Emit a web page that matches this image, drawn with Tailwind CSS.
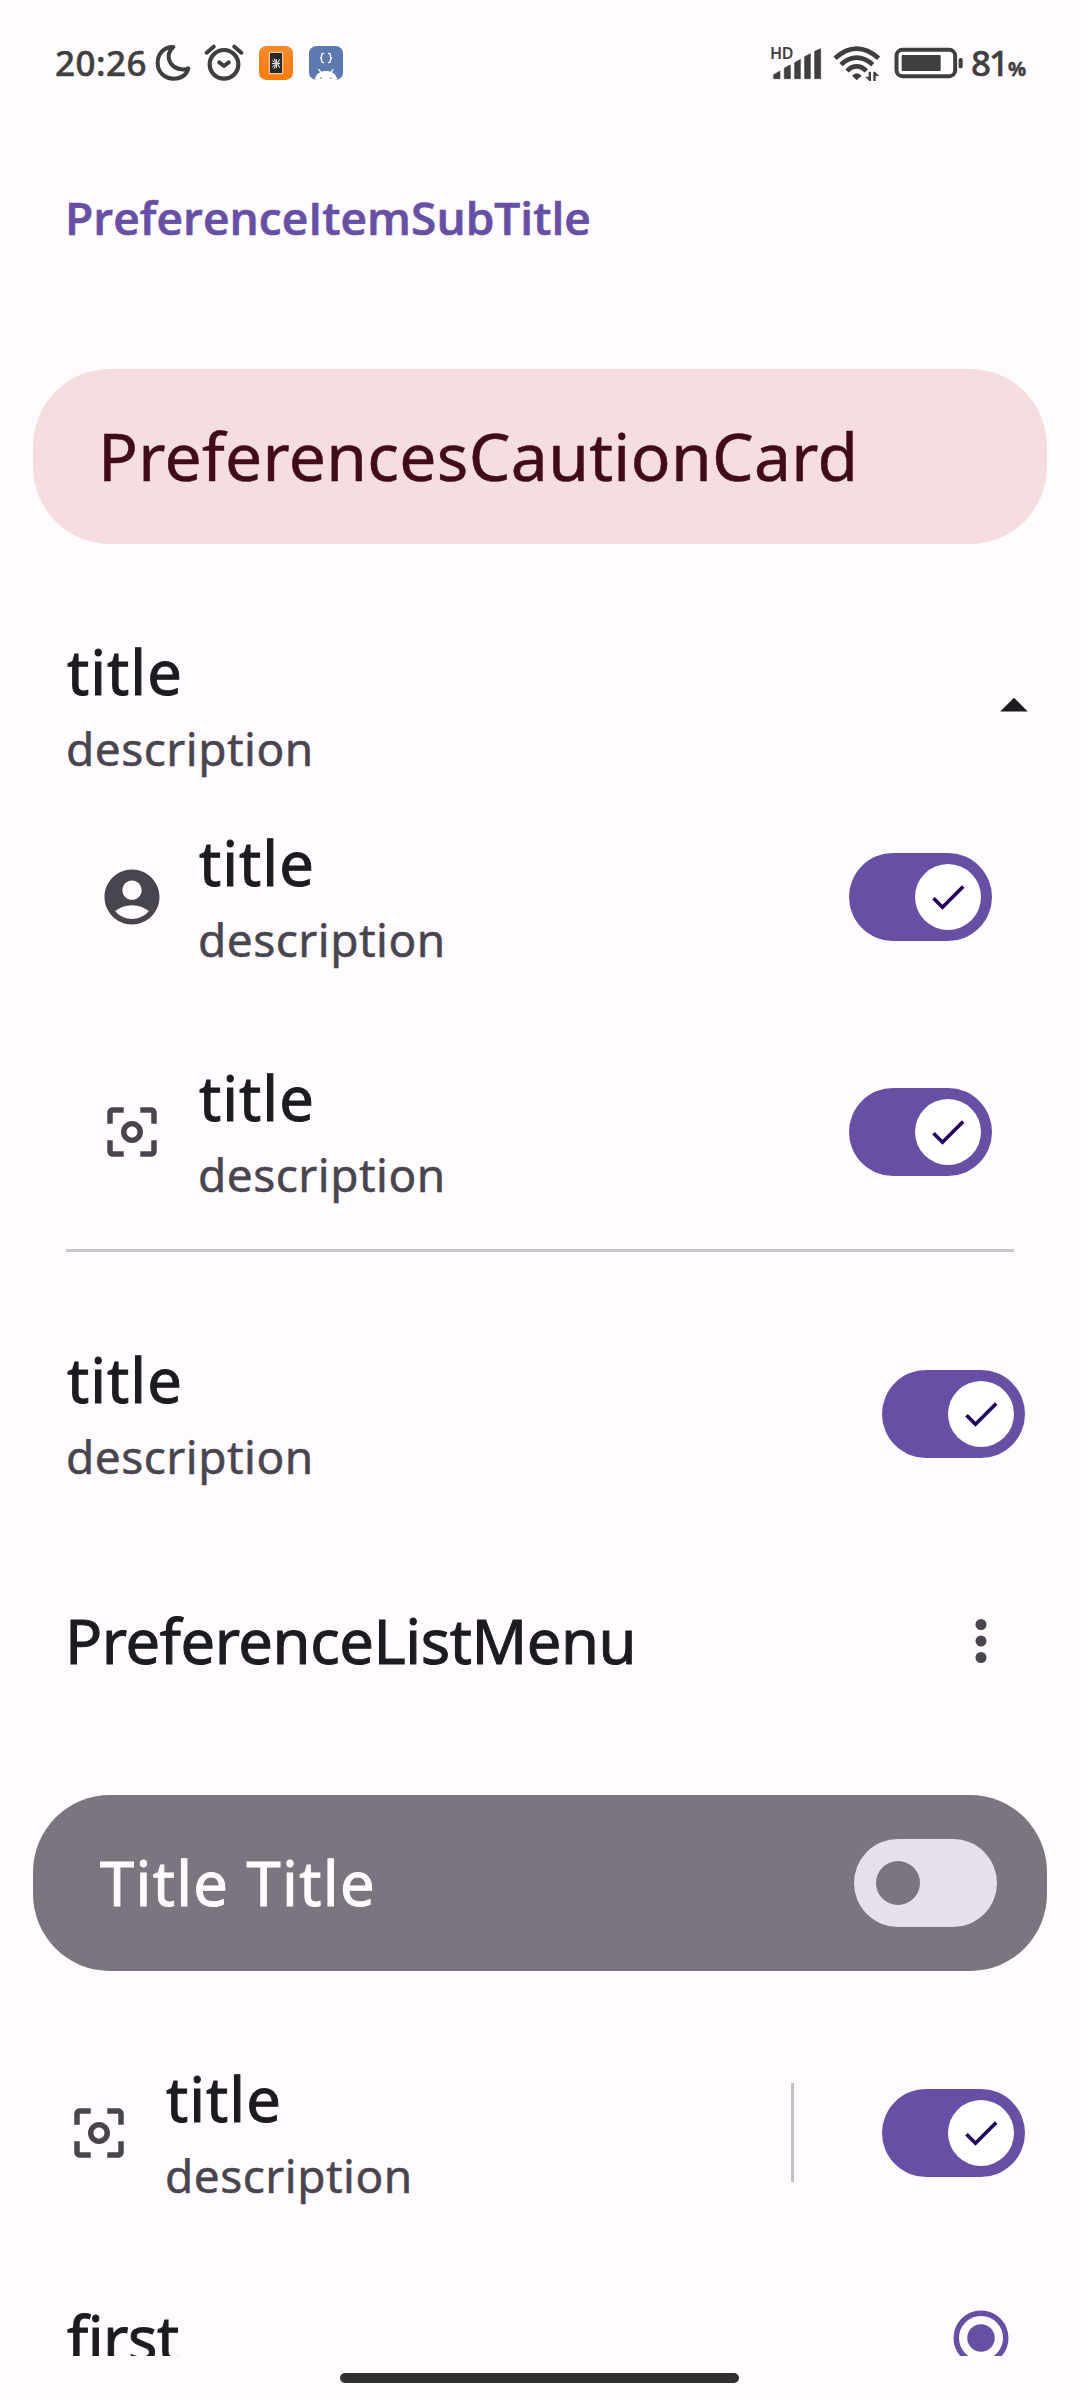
<!DOCTYPE html>
<html lang="en">
<head>
<meta charset="utf-8">
<title>Preferences</title>
<script src="https://cdn.jsdelivr.net/npm/@tailwindcss/browser@4"></script>
</head>
<body class="bg-[#fffbff] w-[1080px] h-[2400px] overflow-hidden font-['Noto_Sans',sans-serif] text-[#1c1b1f]">
<svg class="hidden">
  <symbol id="focus" viewBox="0 0 24 24"><path fill-rule="evenodd" d="M5 15H3v4c0 1.1.9 2 2 2h4v-2H5v-4zM5 5h4V3H5c-1.1 0-2 .9-2 2v4h2V5zm14-2h-4v2h4v4h2V5c0-1.1-.9-2-2-2zm0 16h-4v2h4c1.1 0 2-.9 2-2v-4h-2v4zM12 8c-2.21 0-4 1.79-4 4s1.79 4 4 4 4-1.79 4-4-1.79-4-4-4zm0 6c-1.1 0-2-.9-2-2s.9-2 2-2 2 .9 2 2-.9 2-2 2z"/></symbol>
  <symbol id="check" viewBox="0 0 24 24"><path d="M9 16.17L4.83 12l-1.42 1.41L9 19 21 7l-1.41-1.41z"/></symbol>
</svg>

<div class="h-[2356px] overflow-hidden">
  <!-- Status bar -->
  <header class="h-[126px] flex text-[#3f3f3f] fill-[#3f3f3f] font-medium">
    <div class="w-[100px] ml-[55px] h-[48px] mt-[39px] text-[35px] leading-[48px] whitespace-nowrap tracking-[0.5px] [-webkit-text-stroke:0.5px_#3f3f3f]">20:26</div>
    <svg class="w-[36px] h-[37px] mt-[44px]" viewBox="345 42 108 111"><path fill="none" stroke="#3f3f3f" stroke-width="12" stroke-linejoin="round" d="M400 51C372 50 353 72 353 98C353 127 374 146 401 146C423 146 439 135 445 115C440 118 432 119 425 118C402 116 385 99 386 77C387 66 392 58 400 51Z"/></svg>
    <svg class="w-[40px] h-[38px] ml-[13px] mt-[43px]" viewBox="493 40 120 114" fill="none" stroke="#3f3f3f" stroke-linecap="round" stroke-linejoin="round"><circle cx="553" cy="104" r="43" stroke-width="12.500"/><path stroke-width="12" d="M539 98L553 109L567 98M501 69L522 51M605 69L584 51"/></svg>
    <svg class="w-[34px] h-[34px] ml-[15px] mt-[46px]" viewBox="657 48 102 102"><defs><linearGradient id="or" x2="0" y2="1"><stop stop-color="#f58a2c"/><stop offset="1" stop-color="#fb7a0b"/></linearGradient></defs><rect x="657" y="48" width="102" height="102" rx="22" fill="url(#or)"/><rect x="688" y="67" width="40" height="64" fill="#292929" stroke="#ffe0bd" stroke-width="3"/><path fill="none" stroke="#fff" stroke-width="3" d="M697 92l6 4h6M696 101h12M697 111l6-5h6M702 86l4 7M702 116l4-7M709 87v27M719 88l-7 12 7 13M713 100h7"/></svg>
    <svg class="w-[34px] h-[34px] ml-[16px] mt-[46px]" viewBox="807 48 102 102"><rect x="807" y="48" width="102" height="102" rx="22" fill="#5e79b0"/><path fill="none" stroke="#fff" stroke-width="4" d="M852 70h-3q-4 0-4 4v5q0 4-5 5q5 1 5 5v5q0 4 4 4h3M864 70h3q4 0 4 4v5q0 4 5 5q-5 1-5 5v5q0 4-4 4h-3M836 117l7 11M880 117l-7 11"/><path fill="#fff" d="M824 148C829 130 842 123 858 123S887 130 892 148L885 150H831Z"/><circle cx="843" cy="144" r="2.500" fill="#5e79b0"/><circle cx="873" cy="144" r="2.500" fill="#5e79b0"/></svg>

    <div class="relative ml-[427px] w-[52px] h-[34px] mt-[46px]">
      <svg class="w-[52px] h-[34px]" viewBox="60 48 156 102"><path stroke="#3f3f3f" stroke-width="2" stroke-linejoin="round" d="M71 134L90 123V146H71ZM103 114L121 105V146H103ZM134 98L151 88V146H134ZM164 80L181 71V146H164ZM194 64L212 56V146H194Z"/></svg>
      <span class="absolute left-0 -top-[1px] text-[16px] leading-[16px] font-semibold tracking-[-0.3px]">HD</span>
    </div>
    <svg class="w-[48px] h-[36px] ml-[11px] mt-[45px]" viewBox="249 45 144 108"><g fill="none" stroke="#3f3f3f" stroke-width="14"><path d="M255 85Q287 56 320 56T386 85"/><path d="M273 104Q295 83 320 83T368 104"/><path d="M291 123Q304 109 320 109T349 123"/></g><path d="M306 137Q320 122 335 137L320 151ZM356 125h7v28h-5l-12-13h10zM370 153v-28h5l12 13h-10v15z"/></svg>
    <svg class="w-[70px] h-[32px] ml-[13px] mt-[47px]" viewBox="433 51 210 96"><rect x="440.500" y="59.500" width="176" height="79" rx="18" fill="none" stroke="#3f3f3f" stroke-width="12"/><rect x="456" y="75" width="117" height="48" rx="3"/><rect x="627" y="84" width="12" height="31" rx="5"/></svg>
    <div class="ml-[7px] h-[48px] mt-[39px] text-[35px] leading-[48px] whitespace-nowrap tracking-[-2px] [-webkit-text-stroke:0.5px_#3f3f3f]">81<span class="text-[20px] ml-px font-bold">%</span></div>
  </header>

  <main>
    <h2 class="mt-[61px] ml-[65px] text-[46px] leading-[60px] font-['Open_Sans',sans-serif] font-semibold tracking-[0.05px] text-[#6750a4] [-webkit-text-stroke:0.7px_#6750a4]">PreferenceItemSubTitle</h2>

    <section class="mt-[122px] ml-[33px] w-[1014px] h-[175px] rounded-[77px] bg-[#f6dee0] flex items-center pl-[65px] pb-[3px]">
      <div class="text-[66px] leading-[80px] tracking-[0.3px] text-[#410b18] [-webkit-text-stroke:0.5px_#410b18]">PreferencesCautionCard</div>
    </section>

    <div class="mt-[91px] pl-[66px] pr-[33px] h-[142px] flex items-center">
      <div class="flex-1">
        <div class="pl-px text-[61.5px] leading-[72px] tracking-[1px] [-webkit-text-stroke:1px_#1c1b1f]">title</div>
        <div class="mt-[12px] text-[46px] leading-[58px] tracking-[0.5px] text-[#49454f] [-webkit-text-stroke:0.5px_#49454f]">description</div>
      </div>
      <svg class="w-[66px] h-[66px] fill-[#1c1b1f]" viewBox="0 0 24 24"><path d="M7 14l5-5 5 5z"/></svg>
    </div>

    <div class="mt-[49px] pl-[99px] pr-[88px] h-[142px] flex items-center">
      <svg class="w-[66px] h-[66px] fill-[#49454f]" viewBox="0 0 24 24"><path fill-rule="evenodd" d="M12 2C6.480 2 2 6.480 2 12s4.480 10 10 10 10-4.480 10-10S17.520 2 12 2zm0 4c1.930 0 3.500 1.570 3.500 3.500S13.930 13 12 13s-3.500-1.570-3.500-3.500S10.070 6 12 6zm0 14c-2.030 0-4.430-.820-6.140-2.880C7.550 15.800 9.680 15 12 15s4.450.800 6.140 2.120C16.430 19.180 14.030 20 12 20z"/></svg>
      <div class="flex-1 ml-[33px]">
        <div class="pl-px text-[61.5px] leading-[72px] tracking-[1px] [-webkit-text-stroke:1px_#1c1b1f]">title</div>
        <div class="mt-[12px] text-[46px] leading-[58px] tracking-[0.5px] text-[#49454f] [-webkit-text-stroke:0.5px_#49454f]">description</div>
      </div>
      <div class="w-[143px] h-[88px] rounded-full bg-[#6750a4] flex items-center justify-end pr-[11px]"><div class="w-[66px] h-[66px] rounded-full bg-white flex items-center justify-center"><svg class="w-[44px] h-[44px] fill-[#21005d]"><use href="#check"/></svg></div></div>
    </div>

    <div class="mt-[93px] pl-[99px] pr-[88px] h-[142px] flex items-center">
      <svg class="w-[66px] h-[66px] fill-[#49454f]"><use href="#focus"/></svg>
      <div class="flex-1 ml-[33px]">
        <div class="pl-px text-[61.5px] leading-[72px] tracking-[1px] [-webkit-text-stroke:1px_#1c1b1f]">title</div>
        <div class="mt-[12px] text-[46px] leading-[58px] tracking-[0.5px] text-[#49454f] [-webkit-text-stroke:0.5px_#49454f]">description</div>
      </div>
      <div class="w-[143px] h-[88px] rounded-full bg-[#6750a4] flex items-center justify-end pr-[11px]"><div class="w-[66px] h-[66px] rounded-full bg-white flex items-center justify-center"><svg class="w-[44px] h-[44px] fill-[#21005d]"><use href="#check"/></svg></div></div>
    </div>

    <div class="mt-[46px] mx-[66px] h-[3px] bg-[#cac4d0]"></div>

    <div class="mt-[91px] pl-[66px] pr-[55px] h-[142px] flex items-center">
      <div class="flex-1">
        <div class="pl-px text-[61.5px] leading-[72px] tracking-[1px] [-webkit-text-stroke:1px_#1c1b1f]">title</div>
        <div class="mt-[12px] text-[46px] leading-[58px] tracking-[0.5px] text-[#49454f] [-webkit-text-stroke:0.5px_#49454f]">description</div>
      </div>
      <div class="w-[143px] h-[88px] rounded-full bg-[#6750a4] flex items-center justify-end pr-[11px]"><div class="w-[66px] h-[66px] rounded-full bg-white flex items-center justify-center"><svg class="w-[44px] h-[44px] fill-[#21005d]"><use href="#check"/></svg></div></div>
    </div>

    <div class="mt-[119px] pl-[65px] pr-[66px] h-[72px] flex items-center">
      <div class="flex-1 text-[61.5px] leading-[72px] tracking-[-0.45px] [-webkit-text-stroke:1px_#1c1b1f]">PreferenceListMenu</div>
      <svg class="w-[66px] h-[66px] mt-[2px] fill-[#49454f]" viewBox="0 0 24 24"><circle cx="12" cy="6" r="2"/><circle cx="12" cy="12" r="2"/><circle cx="12" cy="18" r="2"/></svg>
    </div>

    <section class="mt-[119px] ml-[33px] w-[1014px] h-[176px] rounded-[77px] bg-[#7a757f] flex items-center pl-[67px] pr-[50px]">
      <div class="flex-1 pb-[2px] text-[61.5px] leading-[72px] tracking-[1.3px] text-[#fffbff] [-webkit-text-stroke:1px_#fffbff]">Title Title</div>
      <div class="w-[143px] h-[88px] rounded-full bg-[#e6e0ec] flex items-center pl-[22px]"><div class="w-[44px] h-[44px] rounded-full bg-[#7a757f]"></div></div>
    </section>

    <div class="mt-[91px] pl-[66px] pr-[55px] h-[142px] flex items-center">
      <svg class="w-[66px] h-[66px] fill-[#49454f]"><use href="#focus"/></svg>
      <div class="flex-1 ml-[33px]">
        <div class="pl-px text-[61.5px] leading-[72px] tracking-[1px] [-webkit-text-stroke:1px_#1c1b1f]">title</div>
        <div class="mt-[12px] text-[46px] leading-[58px] tracking-[0.5px] text-[#49454f] [-webkit-text-stroke:0.5px_#49454f]">description</div>
      </div>
      <div class="w-[3px] h-[99px] bg-[#c2bfc4] mr-[88px] mb-px"></div>
      <div class="w-[143px] h-[88px] rounded-full bg-[#6750a4] flex items-center justify-end pr-[11px]"><div class="w-[66px] h-[66px] rounded-full bg-white flex items-center justify-center"><svg class="w-[44px] h-[44px] fill-[#21005d]"><use href="#check"/></svg></div></div>
    </div>

    <div class="mt-[98px] pl-[67px] pr-[66px] h-[72px] flex items-center">
      <div class="flex-1 pb-[2px] text-[61.5px] leading-[72px] tracking-[-0.5px] [-webkit-text-stroke:1px_#1c1b1f]">first</div>
      <svg class="w-[66px] h-[66px]" viewBox="0 0 24 24"><circle cx="12" cy="12" r="9" fill="none" stroke="#6750a4" stroke-width="2"/><circle cx="12" cy="12" r="5" fill="#6750a4"/></svg>
    </div>
  </main>
</div>
<div class="mt-[17px] ml-[340px] w-[399px] h-[10px] rounded-full bg-[#313033]"></div>
</body>
</html>
